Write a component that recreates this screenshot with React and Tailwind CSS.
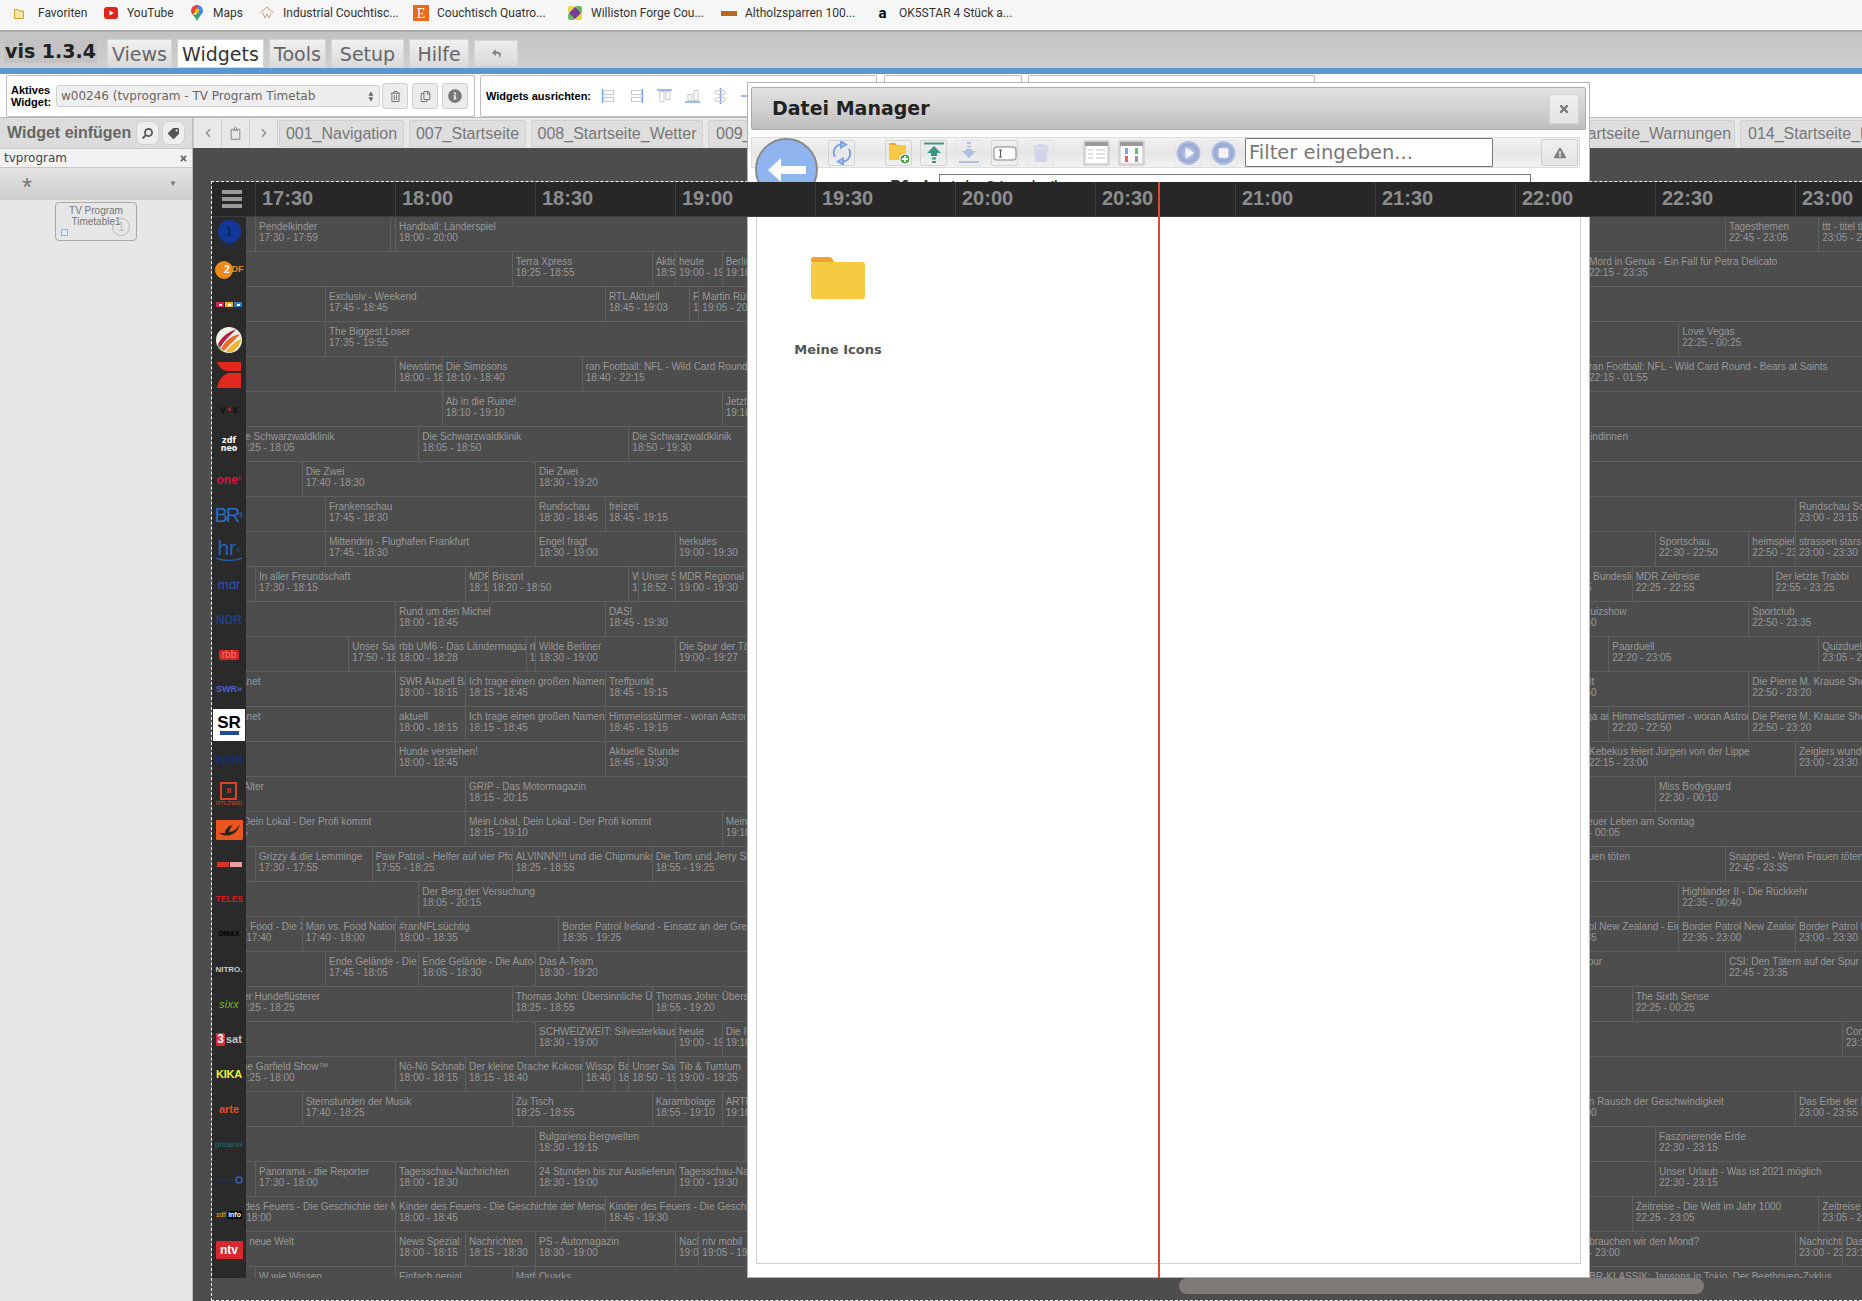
import React from "react";
import {
  FaTimes,
  FaExclamationTriangle,
  FaRegTrashAlt,
  FaTrash,
  FaInfoCircle,
  FaRegCopy,
  FaSearch,
  FaTag,
  FaReply,
  FaChevronLeft,
  FaChevronRight,
  FaRegClipboard,
} from "react-icons/fa";

// 30 minutes are 140px on the time axis, 17:30 sits 9px into the track
const PX_PER_MIN = 140 / 30;
const ORIGIN = 9;
const HOURS = ["17:30", "18:00", "18:30", "19:00", "19:30", "20:00", "20:30", "21:00", "21:30", "22:00", "22:30", "23:00", "23:30"];

const toMin = (t) => {
  const [h, m] = t.split(":").map(Number);
  return (h * 60 + m) - (17 * 60 + 30);
};

const ROWS = [
  { logo: "ard", c: [["17:30", "17:59", "Pendelkinder"], ["17:59", "18:00", "Gefragt"], ["18:00", "20:00", "Handball: Länderspiel"], ["22:45", "23:05", "Tagesthemen"], ["23:05", "23:35", "ttt - titel thesen temperamente"]] },
  { logo: "zdf", c: [["18:25", "18:55", "Terra Xpress"], ["18:55", "19:00", "Aktion Mensch"], ["19:00", "19:10", "heute"], ["19:10", "19:40", "Berlin direkt"], ["22:15", "23:35", "Mord in Genua - Ein Fall für Petra Delicato"]] },
  { logo: "rtl", c: [["17:45", "18:45", "Exclusiv - Weekend"], ["18:45", "19:03", "RTL Aktuell"], ["19:03", "19:05", "Formel"], ["19:05", "20:15", "Martin Rütter"]] },
  { logo: "sat1", c: [["17:45", "19:55", "The Biggest Loser", "17:35 - 19:55"], ["22:35", "00:25", "Love Vegas", "22:25 - 00:25"]] },
  { logo: "pro7", c: [["18:00", "18:10", "Newstime"], ["18:10", "18:40", "Die Simpsons"], ["18:40", "22:15", "ran Football: NFL - Wild Card Round - Bears at Saints"], ["22:15", "01:55", "ran Football: NFL - Wild Card Round - Bears at Saints"]] },
  { logo: "vox", c: [["18:10", "19:10", "Ab in die Ruine!"], ["19:10", "20:15", "Jetzt wird's wild"]] },
  { logo: "neo", c: [["17:25", "18:05", "Die Schwarzwaldklinik"], ["18:05", "18:50", "Die Schwarzwaldklinik"], ["18:50", "19:30", "Die Schwarzwaldklinik"], ["22:00", "23:30", "Freunde und Feindinnen"]] },
  { logo: "one", c: [["17:40", "18:30", "Die Zwei"], ["18:30", "19:20", "Die Zwei"]] },
  { logo: "br", c: [["17:14", "17:45", "Gesundheit!"], ["17:45", "18:30", "Frankenschau"], ["18:30", "18:45", "Rundschau"], ["18:45", "19:15", "freizeit"], ["23:00", "23:15", "Rundschau Sonntags-Magazin"]] },
  { logo: "hr", c: [["17:45", "18:30", "Mittendrin - Flughafen Frankfurt"], ["18:30", "19:00", "Engel fragt"], ["19:00", "19:30", "herkules"], ["22:30", "22:50", "Sportschau"], ["22:50", "23:00", "heimspiel!"], ["23:00", "23:30", "strassen stars"]] },
  { logo: "mdr", c: [["17:30", "18:15", "In aller Freundschaft"], ["18:15", "18:20", "MDR aktuell"], ["18:20", "18:50", "Brisant"], ["18:50", "18:52", "Wetter"], ["18:52", "19:00", "Unser Sandmännchen"], ["19:00", "19:30", "MDR Regional"], ["22:03", "22:25", "Sachsens zu Bundesliga"], ["22:25", "22:55", "MDR Zeitreise"], ["22:55", "23:25", "Der letzte Trabbi"]] },
  { logo: "ndr", c: [["18:00", "18:45", "Rund um den Michel"], ["18:45", "19:30", "DAS!"], ["22:04", "22:50", "Das NDR Quizshow"], ["22:50", "23:35", "Sportclub"]] },
  { logo: "rbb", c: [["17:50", "18:00", "Unser Sandmännchen"], ["18:00", "18:28", "rbb UM6 - Das Ländermagazin"], ["18:28", "18:30", "rbb"], ["18:30", "19:00", "Wilde Berliner"], ["19:00", "19:27", "Die Spur der Täter"], ["22:20", "23:05", "Paarduell"], ["23:05", "23:35", "Quizduell"]] },
  { logo: "swr", c: [["17:14", "18:00", "Der kleine Planet"], ["18:00", "18:15", "SWR Aktuell Baden"], ["18:15", "18:45", "Ich trage einen großen Namen"], ["18:45", "19:15", "Treffpunkt"], ["22:04", "22:50", "Die Hochzeit"], ["22:50", "23:20", "Die Pierre M. Krause Show"]] },
  { logo: "sr", c: [["17:14", "18:00", "Der kleine Planet"], ["18:00", "18:15", "aktuell"], ["18:15", "18:45", "Ich trage einen großen Namen"], ["18:45", "19:15", "Himmelsstürmer - woran Astronomen"], ["22:00", "22:20", "Die 3. Bundesliga am Sonntag"], ["22:20", "22:50", "Himmelsstürmer - woran Astronomen"], ["22:50", "23:20", "Die Pierre M. Krause Show"]] },
  { logo: "wdr", c: [["18:00", "18:45", "Hunde verstehen!"], ["18:45", "19:30", "Aktuelle Stunde"], ["22:15", "23:00", "Kebekus feiert Jürgen von der Lippe"], ["23:00", "23:30", "Zeiglers wunderbare Welt"]] },
  { logo: "rtl2", c: [["17:14", "18:15", "Nachbarn im Alter"], ["18:15", "20:15", "GRIP - Das Motormagazin"], ["22:30", "00:10", "Miss Bodyguard"]] },
  { logo: "kabel", c: [["17:15", "18:15", "Mein Lokal, Dein Lokal - Der Profi kommt"], ["18:15", "19:10", "Mein Lokal, Dein Lokal - Der Profi kommt"], ["19:10", "20:15", "Mein Lokal"], ["22:09", "00:05", "Abenteuer Leben am Sonntag"]] },
  { logo: "srtl", c: [["17:30", "17:55", "Grizzy & die Lemminge"], ["17:55", "18:25", "Paw Patrol - Helfer auf vier Pfoten"], ["18:25", "18:55", "ALVINNN!!! und die Chipmunks"], ["18:55", "19:25", "Die Tom und Jerry Show"], ["21:55", "22:45", "Snapped - Wenn Frauen töten"], ["22:45", "23:35", "Snapped - Wenn Frauen töten"]] },
  { logo: "tele5", c: [["18:05", "20:15", "Der Berg der Versuchung"], ["22:35", "00:40", "Highlander II - Die Rückkehr"]] },
  { logo: "dmax", c: [["17:20", "17:40", "Man vs. Food - Die X"], ["17:40", "18:00", "Man vs. Food Nation"], ["18:00", "18:35", "#ranNFLsüchtig"], ["18:35", "19:25", "Border Patrol Ireland - Einsatz an der Grenze"], ["22:04", "22:35", "Border Patrol New Zealand - Einsatz"], ["22:35", "23:00", "Border Patrol New Zealand"], ["23:00", "23:30", "Border Patrol New Zealand"]] },
  { logo: "nitro", c: [["17:45", "18:05", "Ende Gelände - Die Auto-Checker"], ["18:05", "18:30", "Ende Gelände - Die Auto-Checker"], ["18:30", "19:20", "Das A-Team"], ["21:50", "22:45", "CSI: Den Tätern auf der Spur"], ["22:45", "23:35", "CSI: Den Tätern auf der Spur"]] },
  { logo: "sixx", c: [["17:25", "18:25", "Der Hundeflüsterer"], ["18:25", "18:55", "Thomas John: Übersinnliche Überraschung"], ["18:55", "19:20", "Thomas John: Übersinnliche Überraschung"], ["22:25", "00:25", "The Sixth Sense"]] },
  { logo: "3sat", c: [["18:30", "19:00", "SCHWEIZWEIT: Silvesterklausen"], ["19:00", "19:10", "heute"], ["19:10", "19:40", "Die Insel"], ["23:10", "23:55", "Comedy"]] },
  { logo: "kika", c: [["17:25", "18:00", "The Garfield Show™"], ["18:00", "18:15", "Nö-Nö Schnabeltier"], ["18:15", "18:40", "Der kleine Drache Kokosnuss"], ["18:40", "18:47", "Wissper"], ["18:47", "18:50", "Baumhaus"], ["18:50", "19:00", "Unser Sandmännchen"], ["19:00", "19:25", "Tib & Tumtum"]] },
  { logo: "arte", c: [["17:40", "18:25", "Sternstunden der Musik"], ["18:25", "18:55", "Zu Tisch"], ["18:55", "19:10", "Karambolage"], ["19:10", "19:40", "ARTE Journal"], ["22:04", "23:00", "Menschen in Rausch der Geschwindigkeit"], ["23:00", "23:55", "Das Erbe der Erde"]] },
  { logo: "phoenix", c: [["18:30", "19:15", "Bulgariens Bergwelten"], ["19:15", "20:00", "Bulgariens"], ["22:30", "23:15", "Faszinierende Erde"]] },
  { logo: "ts24", c: [["17:30", "18:00", "Panorama - die Reporter"], ["18:00", "18:30", "Tagesschau-Nachrichten"], ["18:30", "19:00", "24 Stunden bis zur Auslieferung"], ["19:00", "19:30", "Tagesschau-Nachrichten"], ["22:30", "23:15", "Unser Urlaub - Was ist 2021 möglich"]] },
  { logo: "zdfinfo", c: [["17:20", "18:00", "Kinder des Feuers - Die Geschichte der Menschheit"], ["18:00", "18:45", "Kinder des Feuers - Die Geschichte der Menschheit"], ["18:45", "19:30", "Kinder des Feuers - Die Geschichte der Menschheit"], ["22:25", "23:05", "Zeitreise - Die Welt im Jahr 1000"], ["23:05", "23:45", "Zeitreise"]] },
  { logo: "ntv", c: [["17:13", "18:00", "Aufbruch in die neue Welt"], ["18:00", "18:15", "News Spezial: Jahr"], ["18:15", "18:30", "Nachrichten"], ["18:30", "19:00", "PS - Automagazin"], ["19:00", "19:05", "Nachrichten"], ["19:05", "19:30", "ntv mobil"], ["22:09", "23:00", "Wozu brauchen wir den Mond?"], ["23:00", "23:10", "Nachrichten"], ["23:10", "23:30", "Das Duell"]] },
  { logo: "", c: [["17:30", "18:00", "W wie Wissen"], ["18:00", "18:25", "Einfach genial"], ["18:25", "18:30", "Mathe"], ["18:30", "19:00", "Quarks"], ["22:15", "23:45", "BR-KLASSIK: Jansons in Tokio. Der Beethoven-Zyklus"]] },
];

const ChannelLogo = ({ id }) => {
  switch (id) {
    case "ard":
      return (
        <div className="flex flex-col items-center -mt-[2px]">
          <div className="w-[23px] h-[23px] rounded-full bg-[#12399a] flex items-center justify-center text-[15px] font-bold text-[#0c2666]">1</div>
          <span className="text-[4px] leading-[5px] text-[#122c6e]">Das Erste</span>
        </div>
      );
    case "zdf":
      return (
        <div className="flex items-center">
          <span className="w-[18px] h-[18px] rounded-full bg-[#ef8a1d] flex items-center justify-center text-[10px] font-bold text-white pl-[7px]">2</span>
          <span className="-ml-[1px] text-[9px] font-bold text-[#ef8a1d]">DF</span>
        </div>
      );
    case "rtl":
      return (
        <div className="flex gap-[1px]">
          <span className="w-[8px] h-[5px] bg-[#d8264a] flex items-center justify-center"><span className="w-[3px] h-[2px] bg-white" /></span>
          <span className="w-[8px] h-[5px] bg-[#eeb322] flex items-center justify-center"><span className="w-[3px] h-[2px] bg-white" /></span>
          <span className="w-[8px] h-[5px] bg-[#2f7fc0] flex items-center justify-center"><span className="w-[3px] h-[2px] bg-white" /></span>
        </div>
      );
    case "sat1":
      return (
        <svg width="26" height="26" viewBox="0 0 26 26">
          <circle cx="13" cy="13" r="13" fill="#f3f0e6" />
          <path d="M2 17C6 9 14 4 20 2.5C16 7 9 12 4 21Z" fill="#b3204e" />
          <path d="M5 22C8 15 16 8 24 7C20 12 13 18 8 24Z" fill="#ea6d2c" />
          <path d="M10 25C13 20 19 14 25.5 12C24 18 20 23 15 25.5Z" fill="#f2b431" />
          <path d="M2 17C1 20 3 23 6 24L4 21Z" fill="#6ea83f" />
        </svg>
      );
    case "pro7":
      return (
        <svg width="24" height="26" viewBox="0 0 24 26">
          <path d="M0 0H24V9H11C7 9 2 6 0 0Z" fill="#e0281f" />
          <path d="M0 26C1 18 7 11 13 11H24V26Z" fill="#e0281f" />
        </svg>
      );
    case "vox":
      return (
        <div className="flex items-center text-[10px] font-bold text-[#111] leading-none">
          v<span className="w-[3px] h-[3px] mx-[2px] rounded-full bg-[#d02020]" />x
        </div>
      );
    case "neo":
      return <span className="font-['DejaVu_Sans',sans-serif] text-[8px] font-bold text-white leading-[8px] text-center">zdf<br />neo</span>;
    case "one":
      return <span className="text-[12px] font-bold text-[#cf1440] leading-none">one<sup className="text-[5px]">®</sup></span>;
    case "br":
      return <span className="text-[20px] text-[#2b6bc4] leading-none tracking-[-2px]">BR<sup className="text-[7px] tracking-normal">®</sup></span>;
    case "hr":
      return (
        <div className="flex flex-col items-center leading-none">
          <span className="text-[21px] text-[#2563b5] leading-[18px]">hr<sup className="text-[6px]">®</sup></span>
          <svg width="26" height="4" viewBox="0 0 26 4"><path d="M0 1C8 4 18 4 26 1" stroke="#2563b5" strokeWidth="1.2" fill="none" /></svg>
        </div>
      );
    case "mdr":
      return <span className="text-[13px] text-[#2c57ad] leading-[8px] h-[8px] overflow-hidden">mdr</span>;
    case "ndr":
      return <span className="text-[12px] font-bold text-[#1d4188]">NDR</span>;
    case "rbb":
      return <span className="bg-[#d6251f] rounded-[2px] text-[10px] text-[#f07a70] px-[3px] leading-[10px]">rbb</span>;
    case "swr":
      return <span className="text-[9px] font-bold text-[#4d62c4]">SWR»</span>;
    case "sr":
      return (
        <div className="w-[32px] h-[32px] bg-white flex flex-col items-center justify-center">
          <span className="text-[17px] font-bold text-black leading-[16px]">SR</span>
          <span className="w-[19px] h-[4px] bg-[#23479e]" />
        </div>
      );
    case "wdr":
      return <span className="text-[12px] font-bold text-[#15306f]">WDR</span>;
    case "rtl2":
      return (
        <div className="flex flex-col items-center">
          <span className="w-[17px] h-[18px] border-2 border-[#d8441f] flex items-center justify-center text-[8px] font-bold text-[#d8441f]">II</span>
          <span className="text-[6px] font-bold text-[#b83a1e] leading-[7px]">RTLZWEI</span>
        </div>
      );
    case "kabel":
      return (
        <svg width="27" height="20" viewBox="0 0 27 20">
          <rect width="27" height="20" rx="1" fill="#e9561f" />
          <path d="M3 13C10 18 21 16 24 4C21 9 17 12 13 12C14 9 15 7 17 5C12 6 9 9 9 13Z" fill="#29251f" />
        </svg>
      );
    case "srtl":
      return (
        <div className="flex gap-[1px]">
          <span className="w-[12px] h-[5px] bg-[#d8332b]" />
          <span className="w-[12px] h-[5px] bg-[#e6a0a0]" />
        </div>
      );
    case "tele5":
      return <span className="text-[9px] font-bold text-[#cf1d24] tracking-tight">TELE5</span>;
    case "dmax":
      return <span className="text-[7px] font-bold text-black">DMAX</span>;
    case "nitro":
      return <span className="text-[8px] font-bold text-[#c9c9c9]">NITRO.</span>;
    case "sixx":
      return <span className="text-[11px] italic text-[#7db52f] tracking-wide">sixx</span>;
    case "3sat":
      return (
        <div className="flex items-center">
          <span className="bg-[#d92b3a] rounded-[1px] text-[12px] font-bold text-white px-[1px] leading-[13px]">3</span>
          <span className="text-[11px] font-bold text-[#c5c5c5] ml-[1px]">sat</span>
        </div>
      );
    case "kika":
      return <span className="text-[11px] font-bold text-[#e4f23a] tracking-tight">KIKA</span>;
    case "arte":
      return <span className="text-[11px] font-bold text-[#e2501f]">arte</span>;
    case "phoenix":
      return <span className="text-[8px] text-[#1f6d82]">phoenix</span>;
    case "ts24":
      return (
        <svg width="27" height="8" viewBox="0 0 27 8">
          <path d="M0 4H19" stroke="#17346f" strokeWidth="1" />
          <circle cx="23" cy="4" r="3" fill="none" stroke="#2f62b8" strokeWidth="1.5" />
        </svg>
      );
    case "zdfinfo":
      return (
        <div className="flex items-center text-[7px] font-bold leading-[8px]">
          <span className="text-[#d8821c] mr-[1px]">zdf</span>
          <span className="bg-black text-white px-[1px] rounded-[1px]">info</span>
        </div>
      );
    case "ntv":
      return <span className="w-[27px] h-[18px] bg-[#d6282e] rounded-[1px] text-[12px] font-bold text-white flex items-center justify-center">ntv</span>;
    default:
      return null;
  }
};

const Cell = ({ start, stop, title, label, marginLeft }) => {
  const from = toMin(start);
  let to = toMin(stop);
  if (to < from) to += 1440;
  return (
    <div
      className="flex-none h-full border-l border-[#606060] pl-[3px] pt-[4px] overflow-hidden whitespace-nowrap text-[10px] leading-[11px] text-[#989898]"
      style={{ width: (to - from) * PX_PER_MIN, marginLeft }}
    >
      <div>{title}</div>
      <div>{label || `${start} - ${stop}`}</div>
    </div>
  );
};

const ProgramRow = ({ row }) => {
  let cursor = -ORIGIN / PX_PER_MIN;
  return (
    <div className="flex h-[35px] flex-none">
      <div className="w-[34px] flex-none bg-[#2a2a2a] flex items-center justify-center overflow-hidden relative z-10">
        <ChannelLogo id={row.logo} />
      </div>
      <div className="flex flex-1 overflow-hidden border-b border-[#606060]">
        {row.c.map(([start, stop, title, label], i) => {
          const marginLeft = (toMin(start) - cursor) * PX_PER_MIN;
          let end = toMin(stop);
          if (end < toMin(start)) end += 1440;
          cursor = end;
          return <Cell key={i} start={start} stop={stop} title={title} label={label} marginLeft={marginLeft} />;
        })}
      </div>
    </div>
  );
};

const Timetable = () => (
  <div className="relative ml-[18px] mt-[33px] h-[1120px] border-l border-t border-b border-dashed border-white flex flex-col">
    {/* Zeitleiste liegt auch über dem Dialog */}
    <div className="relative z-30 flex h-[35px] flex-none bg-[#272727] border-b border-[#3c3c3c]">
      <div className="w-[43px] flex-none flex flex-col items-center justify-center gap-[3px] pr-[3px]">
        <span className="w-[20px] h-[4px] bg-[#9a9a9a]" />
        <span className="w-[20px] h-[4px] bg-[#9a9a9a]" />
        <span className="w-[20px] h-[4px] bg-[#9a9a9a]" />
      </div>
      {HOURS.map((h) => (
        <div key={h} className="w-[140px] flex-none border-l border-[#3c3c3c] pl-[6px] text-[20px] font-bold leading-[33px] text-[#8d8d8d]">
          {h}
        </div>
      ))}
    </div>
    <div className="h-[1061px] flex-none overflow-hidden flex flex-col">
      {ROWS.map((row, i) => (
        <ProgramRow key={i} row={row} />
      ))}
    </div>
    <div className="absolute z-30 left-[946px] top-0 w-[2px] h-[1096px] bg-[#e0463c]" />
    <div className="ml-[967px] w-[525px] h-[16px] rounded-full bg-[#7f7977]" />
  </div>
);

const BOOKMARKS = [
  { w: "w-[90px]", gap: "gap-[14px]", label: "Favoriten", icon: <svg width="10" height="11" viewBox="0 0 10 11"><path d="M0.5 1.5H4L5 3H9.5V10.5H0.5Z" fill="#f8e6a4" stroke="#c9a227" /></svg> },
  { w: "w-[87px]", gap: "gap-[9px]", label: "YouTube", icon: <svg width="14" height="12" viewBox="0 0 14 12"><rect width="14" height="12" rx="3" fill="#e2231a" /><path d="M5.5 3.5L10 6L5.5 8.5Z" fill="#fff" /></svg> },
  { w: "w-[69px]", gap: "gap-[10px]", label: "Maps", icon: <svg width="12" height="16" viewBox="0 0 12 16"><path d="M6 0C9 0 12 2.4 12 5.8C12 9.5 8 11 6 16Z" fill="#4285f4" /><path d="M6 0C3 0 0 2.4 0 5.8C0 7.4 0.8 8.6 1.7 9.8L6 5.8Z" fill="#ea4335" /><path d="M1.7 9.8C3.3 11.6 5 13.5 6 16L8.5 9Z" fill="#34a853" /><circle cx="6" cy="5.8" r="2.2" fill="#fbbc04" /></svg> },
  { w: "w-[153px]", gap: "gap-[9px]", label: "Industrial Couchtisc...", icon: <svg width="14" height="14" viewBox="0 0 14 14"><path d="M0.5 7L7 1L13.5 7" stroke="#d9915d" fill="none" /><path d="M3 7L5 12L7 8L9 12L11 7" stroke="#c9a17d" fill="none" /></svg> },
  { w: "w-[154px]", gap: "gap-[8px]", label: "Couchtisch Quatro...", icon: <span className="w-[16px] h-[16px] bg-[#e8691d] flex items-center justify-center font-['Liberation_Serif',serif] text-[14px] text-white">E</span> },
  { w: "w-[154px]", gap: "gap-[8px]", label: "Williston Forge Cou...", icon: <svg width="16" height="16" viewBox="0 0 16 16"><rect x="1" y="1" width="7" height="7" rx="2" fill="#e4d84a" /><rect x="8" y="1" width="7" height="7" rx="2" fill="#6cb95c" /><rect x="1" y="8" width="7" height="7" rx="2" fill="#6cb95c" /><rect x="8" y="8" width="7" height="7" rx="2" fill="#e4d84a" /><path d="M8 2L14 8L8 14L2 8Z" fill="#7c3a9c" /></svg> },
  { w: "w-[154px]", gap: "gap-[8px]", label: "Altholzsparren 100...", icon: <span className="w-[16px] h-[5px] bg-[#b76a24]" /> },
  { w: "w-[150px]", gap: "gap-[9px]", label: "OK5STAR 4 Stück a...", icon: <span className="w-[15px] text-center font-bold text-[15px] leading-[15px] text-black">a</span> },
];

const MENU_TABS = [
  { label: "Views", w: "w-[65px]" },
  { label: "Widgets", w: "w-[87px]", active: true },
  { label: "Tools", w: "w-[57px]" },
  { label: "Setup", w: "w-[73px]" },
  { label: "Hilfe", w: "w-[60px]" },
];

const BookmarkBar = () => (
  <div className="h-[32px] flex-none bg-[#f6f6f6] border-b-2 border-[#a9a9a9] flex items-center pl-[14px] pb-[4px] font-['Roboto',sans-serif] text-[12px] text-[#333]">
    {BOOKMARKS.map((b) => (
      <div key={b.label} className={`${b.w} ${b.gap} flex items-center flex-none whitespace-nowrap`}>
        {b.icon}
        <span>{b.label}</span>
      </div>
    ))}
  </div>
);

const MenuBar = () => (
  <div className="h-[36px] flex-none bg-gradient-to-b from-[#c3c3c3] to-[#cfcfcf] flex items-end font-['DejaVu_Sans',sans-serif] pl-[4px]">
    <div className="w-[93px] h-[24px] mb-[5px] bg-[#c2c2c2] text-[19px] font-bold leading-[24px] text-[#222] text-center whitespace-nowrap">vis 1.3.4</div>
    <div className="flex items-end gap-[5px] ml-[10px]">
      {MENU_TABS.map((t) => (
        <div
          key={t.label}
          className={`${t.w} h-[29px] text-center text-[19px] leading-[28px] border border-[#d5d5d5] ${t.active ? "bg-white text-[#333]" : "bg-gradient-to-b from-[#f0f0f0] to-[#dadada] text-[#666]"}`}
        >
          {t.label}
        </div>
      ))}
      <div className="w-[44px] h-[26px] mb-[2px] bg-gradient-to-b from-[#ececec] to-[#dcdcdc] border border-[#d5d5d5] flex items-center justify-center text-[#888] text-[9px]">
        <FaReply />
      </div>
    </div>
  </div>
);

const AlignIcon = ({ type }) => {
  const blue = "#7fa6ec";
  const gray = "#c9c9c9";
  const shapes = {
    left: (<><path d="M1.5 1V15" stroke={blue} strokeWidth="1.5" /><rect x="2.5" y="2.5" width="10" height="4" fill="none" stroke={gray} /><rect x="2.5" y="9.5" width="10" height="4" fill="none" stroke={gray} /></>),
    right: (<><path d="M13.5 1V15" stroke={blue} strokeWidth="1.5" /><rect x="2.5" y="2.5" width="10" height="4" fill="none" stroke={gray} /><rect x="2.5" y="9.5" width="10" height="4" fill="none" stroke={gray} /></>),
    top: (<><path d="M0 2H15" stroke={blue} strokeWidth="1.5" /><rect x="3" y="3.5" width="4" height="10" fill="none" stroke={gray} /><rect x="9" y="3.5" width="4" height="8" fill="none" stroke={gray} /></>),
    bottom: (<><path d="M0 14H15" stroke={blue} strokeWidth="1.5" /><rect x="3" y="6.5" width="4" height="6" fill="none" stroke={gray} /><rect x="9" y="2.5" width="4" height="10" fill="none" stroke={gray} /></>),
    center: (<><path d="M7.5 0V16" stroke={blue} strokeWidth="1.5" /><rect x="2.5" y="2.5" width="10" height="4" rx="2" fill="none" stroke={gray} /><rect x="2.5" y="9.5" width="10" height="4" rx="2" fill="none" stroke={gray} /></>),
    middle: (<path d="M0 8H15" stroke={blue} strokeWidth="1.5" />),
  };
  return <svg width="15" height="16" viewBox="0 0 15 16" className="flex-none">{shapes[type]}</svg>;
};

const Panel = ({ className, children }) => (
  <div className={`h-[42px] flex-none bg-white border border-[#bdbdbd] rounded-[2px] flex items-center ${className}`}>
    {children}
  </div>
);

const SmallBtn = ({ children }) => (
  <div className="w-[26px] h-[26px] flex-none bg-[#ececec] border border-[#d0d0d0] rounded-[3px] flex items-center justify-center text-[#777] text-[11px]">
    {children}
  </div>
);

const WidgetBar = () => (
  <div className="h-[44px] flex-none bg-white flex items-start pt-[1px] border-b border-[#bbb]">
    <Panel className="ml-[6px] w-[469px] pl-[4px]">
      <div className="w-[45px] text-[11px] font-bold leading-[12px] text-black">Aktives<br />Widget:</div>
      <div className="w-[324px] h-[22px] flex-none bg-[#eeeeee] border border-[#d0d0d0] rounded-[3px] flex items-center pl-[4px] font-['DejaVu_Sans',sans-serif] text-[12px] text-[#666]">
        <span className="w-[255px] overflow-hidden whitespace-nowrap">w00246 (tvprogram - TV Program Timetable1)</span>
        <span className="ml-auto mr-[6px] text-[6px] leading-[6px] text-[#666] text-center">▲<br />▼</span>
      </div>
      <div className="flex gap-[4px] ml-[2px]">
        <SmallBtn><FaRegTrashAlt /></SmallBtn>
        <SmallBtn><FaRegCopy /></SmallBtn>
        <SmallBtn><FaInfoCircle className="text-[14px]" /></SmallBtn>
      </div>
    </Panel>
    <Panel className="ml-[5px] w-[397px] pl-[5px]">
      <span className="text-[11px] font-bold text-black whitespace-nowrap w-[110px] flex-none">Widgets ausrichten:</span>
      <div className="flex gap-[13px] ml-[5px]">
        <AlignIcon type="left" />
        <AlignIcon type="right" />
        <AlignIcon type="top" />
        <AlignIcon type="bottom" />
        <AlignIcon type="center" />
        <AlignIcon type="middle" />
      </div>
    </Panel>
    <Panel className="ml-[7px] w-[138px]" />
    <Panel className="ml-[6px] w-[287px]" />
  </div>
);

const ViewTab = ({ className, children }) => (
  <div className={`h-[27px] flex-none bg-[#dedede] border border-[#d0d0d0] rounded-[2px] text-[16px] leading-[26px] text-[#777] text-center whitespace-nowrap overflow-hidden ${className}`}>
    {children}
  </div>
);

const ViewTabs = () => (
  <div className="h-[30px] flex-none bg-[#e8e8e8] flex items-center border-l border-[#ccc] overflow-hidden">
    <div className="flex flex-none h-[28px] text-[#999] text-[10px]">
      <div className="w-[28px] border-r border-[#d0d0d0] flex items-center justify-center"><FaChevronLeft /></div>
      <div className="w-[28px] border-r border-[#d0d0d0] flex items-center justify-center"><FaRegClipboard className="text-[13px]" /></div>
      <div className="w-[28px] border-r border-[#d0d0d0] flex items-center justify-center"><FaChevronRight /></div>
    </div>
    <div className="flex gap-[5px] ml-[1px]">
      <ViewTab className="w-[125px]">001_Navigation</ViewTab>
      <ViewTab className="w-[117px]">007_Startseite</ViewTab>
      <ViewTab className="w-[172px]">008_Startseite_Wetter</ViewTab>
      <ViewTab className="w-[820px] text-left pl-[7px]">009_Startseite_Kalender</ViewTab>
      <ViewTab className="w-[202px]">013_Startseite_Warnungen</ViewTab>
      <ViewTab className="w-[200px] text-left pl-[7px]">014_Startseite_Müll</ViewTab>
    </div>
  </div>
);

const LeftPanel = () => (
  <div className="w-[192px] flex-none bg-[#e6e6e6] flex flex-col">
    <div className="h-[30px] flex-none flex items-center pl-[7px] bg-[#dcdcdc]">
      <span className="text-[16px] font-bold text-[#666] w-[129px] whitespace-nowrap">Widget einfügen</span>
      <div className="flex gap-[3px] text-[#555] text-[11px]">
        <span className="w-[23px] h-[24px] bg-[#eee] border border-[#d0d0d0] rounded-[7px] flex items-center justify-center"><FaSearch className="-scale-x-100" /></span>
        <span className="w-[23px] h-[24px] bg-[#eee] border border-[#d0d0d0] rounded-[7px] flex items-center justify-center"><FaTag className="rotate-90" /></span>
      </div>
    </div>
    <div className="h-[20px] flex-none bg-[#f2f2f2] border-t border-b border-[#c8c8c8] flex items-center pl-[4px] pr-[4px] text-[#444] font-['DejaVu_Sans',sans-serif]">
      <span className="text-[12px]">tvprogram</span>
      <FaTimes className="ml-auto text-[9px] text-[#666]" />
    </div>
    <div className="h-[32px] flex-none bg-gradient-to-b from-[#e2e2e2] to-[#cfcfcf] border-b border-[#c8c8c8] flex items-center pl-[22px] pr-[15px] text-[#777]">
      <span className="text-[26px] leading-[26px] mt-[7px]">*</span>
      <span className="ml-auto text-[8px]">▼</span>
    </div>
    <div className="pt-[2px] flex justify-center">
      <div className="relative w-[82px] h-[39px] bg-[#e6e6e6] border border-[#a8a8a8] rounded-[4px] text-[10px] leading-[11px] text-[#777] text-center pt-[2px]">
        TV Program<br />Timetable1
        {/* kaputtes Vorschaubild + Nummer liegen über der Kachel */}
        <span className="absolute left-[5px] bottom-[4px] w-[7px] h-[7px] bg-[#dfe8f2] border border-[#9fb3c8]" />
        <span className="absolute right-[6px] bottom-[4px] w-[18px] h-[18px] rounded-full border border-[#bbb] text-[#bbb] text-[12px] leading-[17px]">1</span>
      </div>
    </div>
  </div>
);

const ToolBtn = ({ className = "", faded, children }) => (
  <div className={`w-[27px] h-[26px] flex-none border rounded-[2px] flex items-center justify-center ${faded ? "border-[#e6e6e6]" : "border-[#d4d4d4]"} ${className}`}>
    {children}
  </div>
);

const GlassIcon = ({ id, children }) => (
  <svg width="26" height="26" viewBox="0 0 26 26">
    <defs>
      <radialGradient id={id} cx="50%" cy="50%" r="50%">
        <stop offset="0%" stopColor="#d3dcf2" />
        <stop offset="70%" stopColor="#98a8d2" />
        <stop offset="100%" stopColor="#b9c5e6" />
      </radialGradient>
    </defs>
    <circle cx="13" cy="13" r="12.5" fill={`url(#${id})`} />
    {children}
  </svg>
);

const DialogToolbar = () => (
  <div className="ml-[3px] w-[829px] h-[31px] flex-none mt-[7px] border border-[#dcdcdc] bg-gradient-to-b from-[#f2f2f2] via-[#e6e6e6] to-[#f2f2f2] flex items-center pl-[76px] pr-[1px]">
    <ToolBtn>
      <svg width="22" height="24" viewBox="0 0 22 24" fill="none" stroke="#7fa3de" strokeWidth="2">
        <path d="M4 16C1 10 4 4 11 3" />
        <path d="M18 8C21 14 18 20 11 21" />
        <path d="M15 3.5L10 0.5V6.5Z" fill="#bcd0f0" />
        <path d="M7 20.5L12 23.5V17.5Z" fill="#bcd0f0" />
      </svg>
    </ToolBtn>
    <ToolBtn className="ml-[30px]">
      <svg width="25" height="24" viewBox="0 0 25 24">
        <path d="M3 3C3 2 4 2 5 2H9L11 4H3Z" fill="#f0a030" />
        <path d="M3 4H19C20 4 20 5 20 6V18C20 19 19 19 18 19H4C3 19 3 18 3 17Z" fill="#f5cb42" />
        <circle cx="19" cy="18" r="5" fill="#45a33a" stroke="#fff" />
        <path d="M19 15V21M16 18H22" stroke="#fff" strokeWidth="1.8" />
      </svg>
    </ToolBtn>
    <ToolBtn className="ml-[8px]">
      <svg width="24" height="24" viewBox="0 0 24 24" fill="#3e9682">
        <rect x="2" y="1.5" width="20" height="2" />
        <path d="M12 5L19 12H15V15H9V12H5Z" />
        <rect x="10" y="16.5" width="4" height="2" />
        <rect x="10" y="20" width="4" height="2" />
      </svg>
    </ToolBtn>
    <ToolBtn faded className="ml-[8px]">
      <svg width="24" height="24" viewBox="0 0 24 24" fill="#aebfe2">
        <rect x="10" y="1" width="4" height="2" />
        <rect x="10" y="4.5" width="4" height="2" />
        <path d="M12 17L5 10H9V8H15V10H19Z" />
        <rect x="2" y="20" width="20" height="2" />
      </svg>
    </ToolBtn>
    <ToolBtn className="ml-[9px]">
      <svg width="24" height="24" viewBox="0 0 24 24">
        <rect x="1" y="6" width="22" height="13" rx="3" fill="#fff" stroke="#aaa" strokeWidth="1.5" />
        <path d="M6 9H9M6 16H9M7.5 9V16" stroke="#555" strokeWidth="1" />
      </svg>
    </ToolBtn>
    <ToolBtn faded className="ml-[9px]">
      <FaTrash className="text-[18px] text-[#d2d4ea]" />
    </ToolBtn>
    <ToolBtn className="ml-[29px]">
      <svg width="25" height="24" viewBox="0 0 25 24">
        <rect x="1" y="1" width="23" height="22" fill="#fff" stroke="#bbb" />
        <rect x="1" y="1" width="23" height="4" fill="#9a9a9a" />
        <path d="M4 9H9M12 9H21M4 13H9M12 13H21M4 17H9M12 17H21" stroke="#c4c4c4" />
      </svg>
    </ToolBtn>
    <ToolBtn className="ml-[8px]">
      <svg width="25" height="24" viewBox="0 0 25 24">
        <rect x="1" y="1" width="23" height="22" fill="#fff" stroke="#bbb" />
        <rect x="1" y="1" width="23" height="4" fill="#9a9a9a" />
        <rect x="6" y="7" width="3" height="6" fill="#7ea6dc" />
        <rect x="16" y="7" width="3" height="6" fill="#6bb87a" />
        <rect x="6" y="15" width="3" height="6" fill="#e0666a" />
        <rect x="16" y="15" width="3" height="6" fill="#999" />
      </svg>
    </ToolBtn>
    <ToolBtn faded className="ml-[30px]">
      <GlassIcon id="glass-play"><path d="M10 7L19 13L10 19Z" fill="#f2f4fa" /></GlassIcon>
    </ToolBtn>
    <ToolBtn faded className="ml-[8px]">
      <GlassIcon id="glass-stop"><rect x="8" y="8" width="10" height="10" rx="1" fill="#f2f4fa" /></GlassIcon>
    </ToolBtn>
    <div className="ml-[8px] w-[248px] h-[29px] flex-none bg-white border border-[#777] rounded-[1px] pl-[3px] font-['DejaVu_Sans',sans-serif] text-[19.5px] leading-[27px] text-[#777] whitespace-nowrap">
      Filter eingeben...
    </div>
    <div className="ml-auto w-[37px] h-[27px] flex-none bg-gradient-to-b from-[#f0f0f0] to-[#e4e4e4] border border-[#cfcfcf] rounded-[2px] flex items-center justify-center text-[12px] text-[#808080]">
      <FaExclamationTriangle />
    </div>
  </div>
);

const FileDialog = () => (
  <div className="absolute z-20 left-[747px] top-[82px] w-[843px] h-[1196px] bg-white border border-[#b4b4b4] pt-[4px] pb-[13px] flex flex-col">
    <div className="ml-[3px] w-[835px] h-[43px] flex-none border border-[#ababab] rounded-[2px] bg-gradient-to-b from-[#e2e2e2] via-[#d2d2d2] to-[#bebebe] flex items-center pl-[20px] pr-[6px]">
      <span className="font-['DejaVu_Sans',sans-serif] text-[19px] font-bold text-[#222]">Datei Manager</span>
      <div className="ml-auto w-[30px] h-[30px] bg-gradient-to-b from-[#f0f0f0] to-[#e2e2e2] border border-[#d4d4d4] flex items-center justify-center text-[12px] text-[#777]">
        <FaTimes />
      </div>
    </div>
    <DialogToolbar />
    {/* runder Zurück-Knopf ragt über Toolbar und Pfadzeile */}
    <div className="absolute z-10 left-[7px] top-[55px] w-[63px] h-[63px] rounded-full bg-[#8fb4ef] border-2 border-[#8b8b8b] flex items-center justify-center">
      <svg width="38" height="24" viewBox="0 0 38 24"><path d="M0 12L13 0V8H38V16H13V24Z" fill="#fff" /></svg>
    </div>
    <div className="h-[28px] flex-none mt-[6px] flex items-start">
      <span className="ml-[142px] w-[49px] font-['DejaVu_Sans',sans-serif] text-[15px] font-bold leading-[21px] text-[#333] pt-[3px]">Pfad:</span>
      <div className="w-[592px] h-[28px] bg-white border border-[#777] pl-[8px] pt-[2px] font-['DejaVu_Sans',sans-serif] text-[18px] leading-[21px] text-[#333]">/vis.0/main/icons</div>
    </div>
    <div className="flex-1 ml-[8px] w-[825px] mt-[4px] border border-[#d0d0d0] pt-[50px]">
      <div className="ml-[21px] w-[120px] flex flex-col items-center">
        <svg width="54" height="42" viewBox="0 0 54 42">
          <path d="M0 3C0 1 1 0 3 0H18C20 0 21 1 23 5H0Z" fill="#f0a030" />
          <path d="M0 7C0 6 1 5 3 5H51C53 5 54 6 54 8V39C54 41 53 42 51 42H3C1 42 0 41 0 39Z" fill="#f5cb42" />
        </svg>
        <span className="mt-[43px] font-['DejaVu_Sans',sans-serif] text-[13px] font-bold leading-[16px] text-[#555] whitespace-nowrap">Meine Icons</span>
      </div>
    </div>
  </div>
);

export default function App() {
  return (
    <div className="relative w-[1862px] h-[1301px] overflow-hidden flex flex-col bg-white font-['Liberation_Sans',sans-serif]">
      <BookmarkBar />
      <MenuBar />
      <div className="h-[6px] flex-none bg-[#5a97d0]" />
      <WidgetBar />
      <div className="flex flex-1 min-h-0">
        <LeftPanel />
        <div className="flex-1 min-w-0 flex flex-col border-l border-[#bbb]">
          <ViewTabs />
          <div className="flex-1 min-h-0 bg-[#4d4d4d] overflow-hidden">
            <Timetable />
          </div>
        </div>
      </div>
      <FileDialog />
    </div>
  );
}
